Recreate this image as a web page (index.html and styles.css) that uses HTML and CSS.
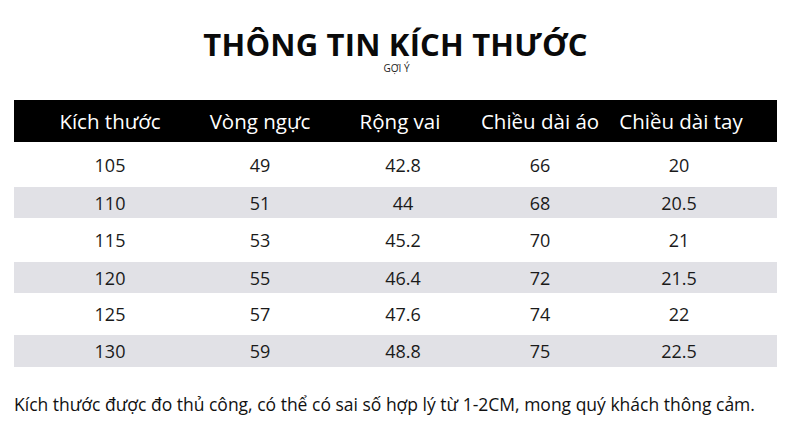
FILE: index.html
```html
<!DOCTYPE html>
<html lang="vi">
<head>
<meta charset="utf-8">
<link rel="stylesheet" href="styles.css">
</head>
<body>
<div class="page">
  <h1 class="title">THÔNG TIN KÍCH THƯỚC</h1>
  <div class="subtitle">GỢI Ý</div>
  <div class="table">
    <div class="row head">
      <div>Kích thước</div><div>Vòng ngực</div><div>Rộng vai</div><div>Chiều dài áo</div><div>Chiều dài tay</div>
    </div>
    <div class="row r1">
      <div>105</div><div>49</div><div class="c3">42.8</div><div>66</div><div class="c5">20</div>
    </div>
    <div class="row r2 grey">
      <div>110</div><div>51</div><div class="c3">44</div><div>68</div><div class="c5">20.5</div>
    </div>
    <div class="row r3">
      <div>115</div><div>53</div><div class="c3">45.2</div><div>70</div><div class="c5">21</div>
    </div>
    <div class="row r4 grey">
      <div>120</div><div>55</div><div class="c3">46.4</div><div>72</div><div class="c5">21.5</div>
    </div>
    <div class="row r5">
      <div>125</div><div>57</div><div class="c3">47.6</div><div>74</div><div class="c5">22</div>
    </div>
    <div class="row r6 grey">
      <div>130</div><div>59</div><div class="c3">48.8</div><div>75</div><div class="c5">22.5</div>
    </div>
  </div>
  <p class="note">Kích thước được đo thủ công, có thể có sai số hợp lý từ 1-2CM, mong quý khách thông cảm.</p>
</div>
</body>
</html>
```

FILE: styles.css
```css
html, body {
  margin: 0;
  padding: 0;
  background: #ffffff;
}
body {
  font-family: "Open Sans", "Noto Sans", sans-serif;
  color: #111111;
  width: 790px;
  height: 435px;
  overflow: hidden;
}
.page {
  padding: 26px 13px 0 14px;
}
.title {
  margin: 0;
  text-align: center;
  font-size: 31px;
  line-height: 36px;
  font-weight: 700;
  color: #0a0a0a;
  letter-spacing: 0.2px;
}
.subtitle {
  text-align: center;
  font-size: 10px;
  line-height: 11px;
  color: #222;
  margin-top: 1px;
  padding-left: 2px;
}
.table {
  margin-top: 26px;
  width: 763px;
}
.row {
  display: grid;
  grid-template-columns: 192px 108px 172px 108px 174px;
  align-items: center;
  justify-items: center;
  font-size: 18px;
  color: #1a1a1a;
}
.row > div {
  white-space: nowrap;
}
.row.head {
  background: #000000;
  color: #ffffff;
  height: 42px;
  font-size: 20.5px;
}
.r1 { height: 45px; }
.r3 { height: 44px; }
.r5 { height: 42px; }
.grey {
  background: #e1e1e6;
  height: 31px;
}
.r6 { height: 32px; }
.c3 { padding-left: 6px; }
.c5 { padding-right: 4px; }
.note {
  margin: 25px 0 0 0;
  font-size: 17.5px;
  line-height: 24px;
  color: #111;
  white-space: nowrap;
}
```
